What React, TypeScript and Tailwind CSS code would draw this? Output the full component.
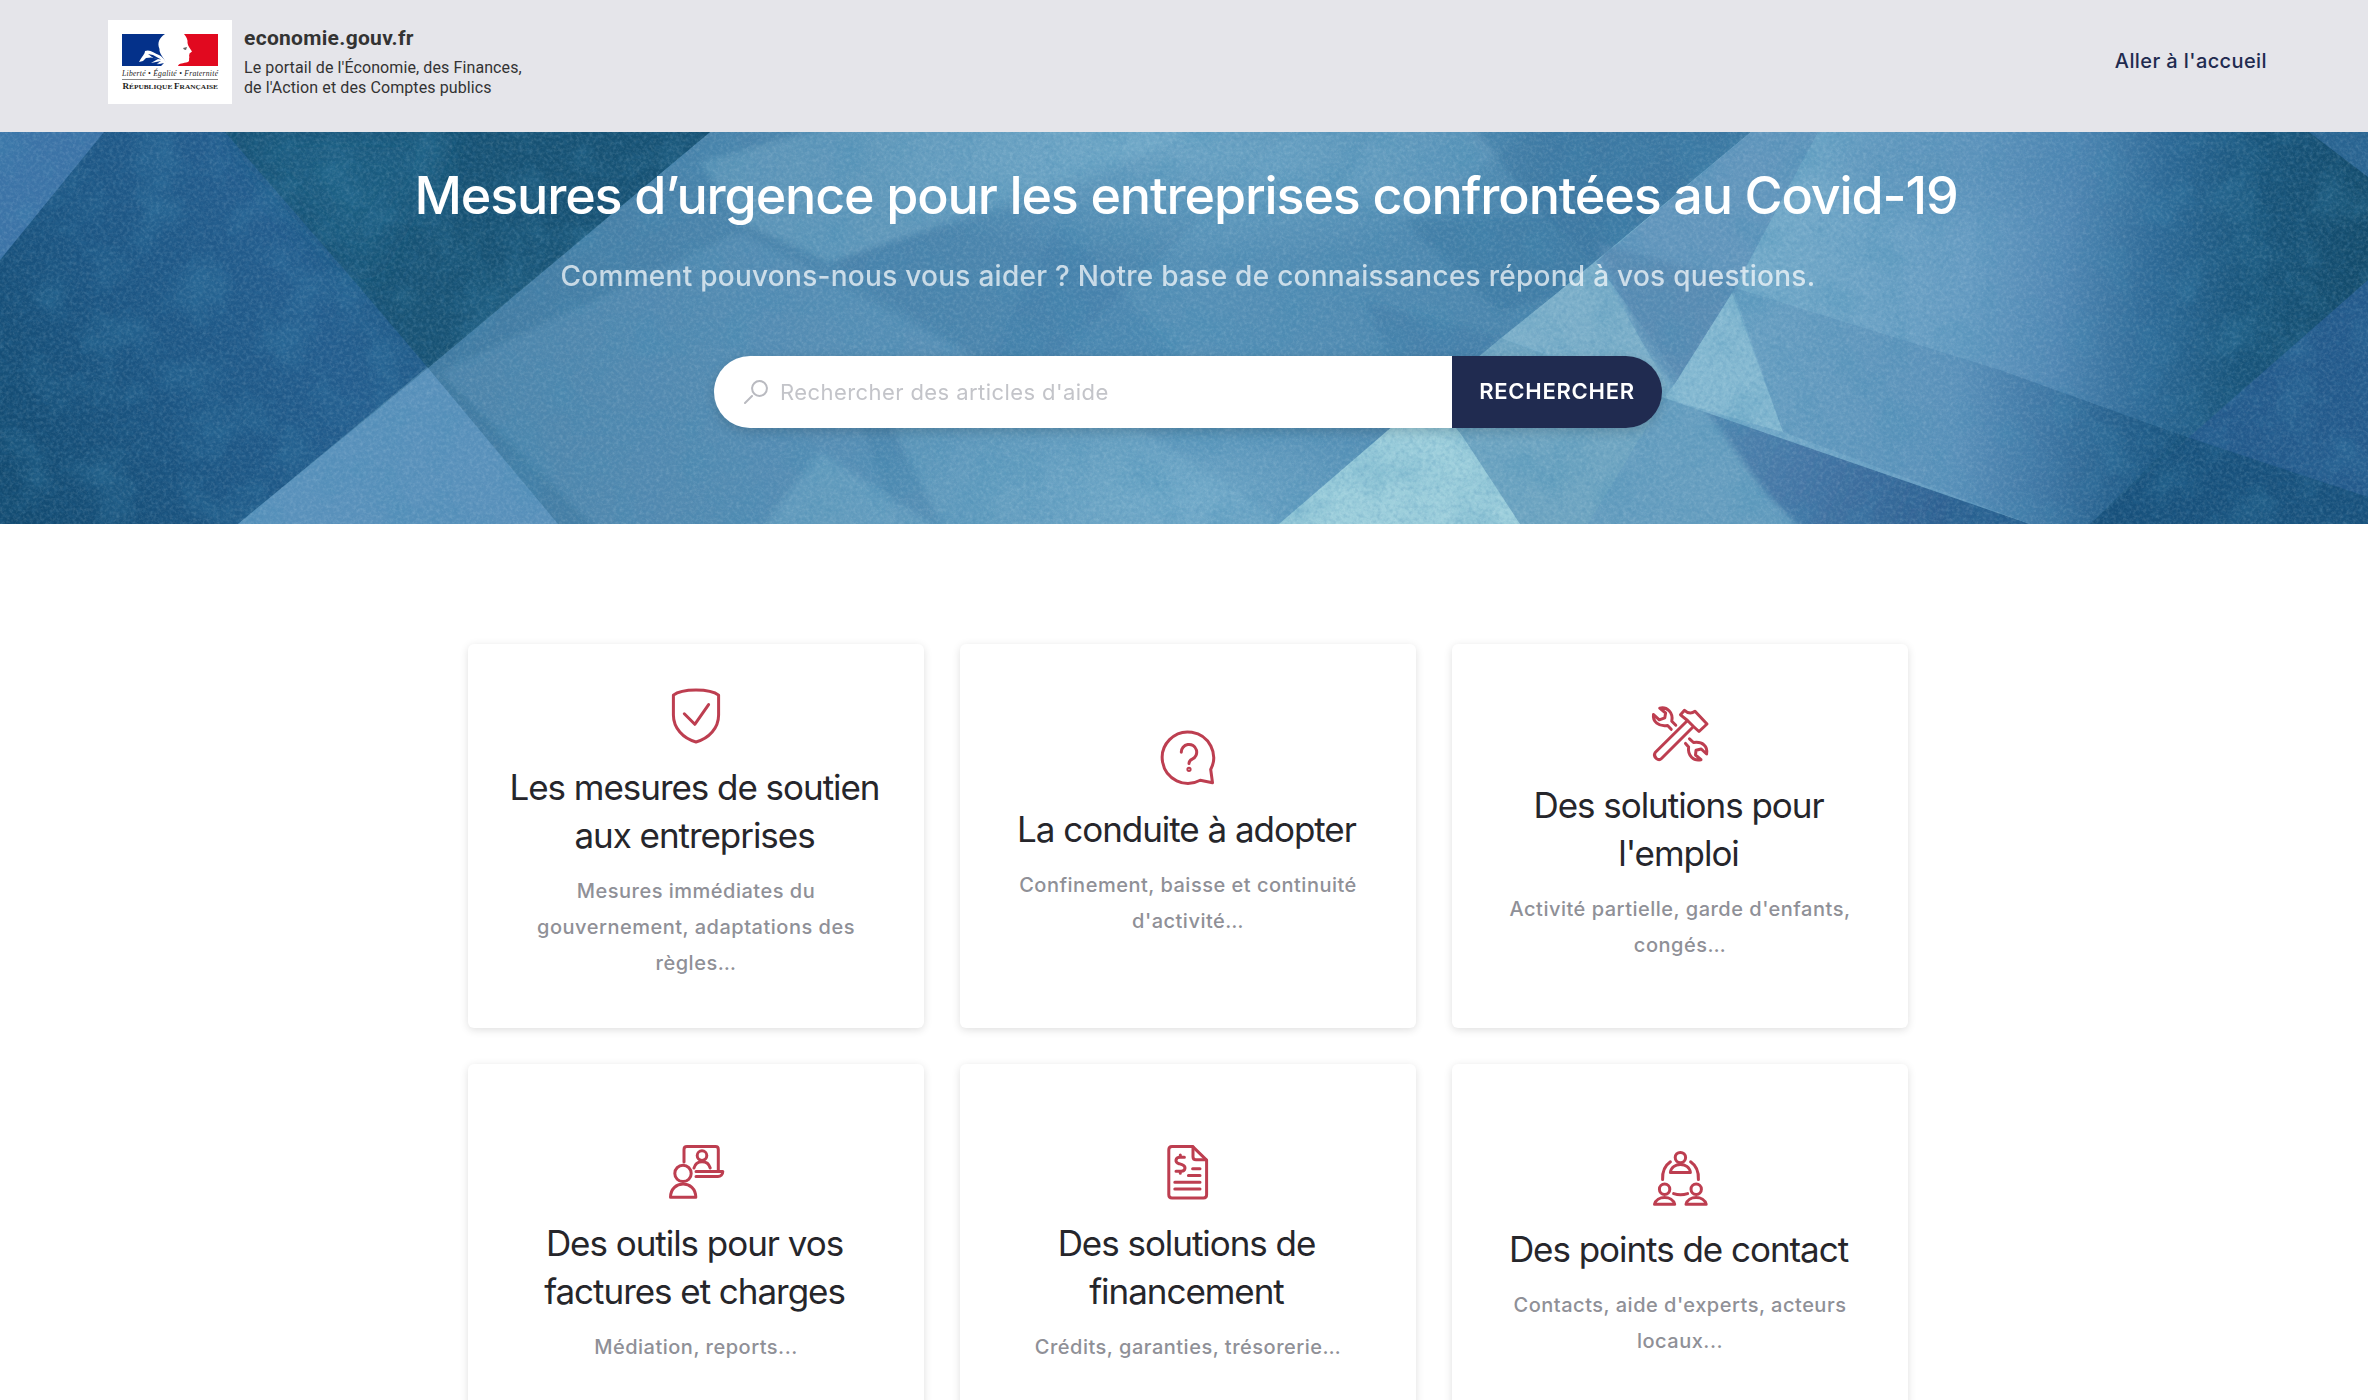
import React from "react";

const ICON = {
  width: 60,
  height: 60,
  viewBox: "0 0 60 60",
  fill: "none",
  stroke: "#bd3e50",
  strokeWidth: 3,
  strokeLinecap: "round" as const,
  strokeLinejoin: "round" as const,
  className: "-m-[2px] shrink-0",
};

function ShieldIcon() {
  return (
    <svg {...ICON}>
      <path d="M7.4 9.2C12 5.400 21 4 30 4C39 4 48 5.400 52.6 9.2V29C52.6 42 43 52.5 30 56C17 52.5 7.4 42 7.4 29Z" />
      <path d="M18.3 27.8L28.8 38.3L42.6 18.6" />
    </svg>
  );
}

function QuestionIcon() {
  return (
    <svg {...ICON}>
      <g transform="translate(0.7 0.5)">
        <path d="M52 41A25.7 25.7 0 1 0 41.5 51.7L53.8 54.2Z" />
        <path d="M22.6 23.8A7.7 7.7 0 1 1 33.5 30.6Q30.3 32.2 30.3 35" />
        <circle cx="30.3" cy="40.8" r="1.6" strokeWidth="2" />
      </g>
    </svg>
  );
}

function ToolsIcon() {
  return (
    <svg {...ICON}>
      <g transform="translate(-1 0)">
        <path d="M38.5 16.5L31.5 10.800L35.5 6.3C39 9.500 43 9.500 46 7.300L58 20L50 27.5L44.5 22.5L12.5 54.5C9.5 57.5 3.5 53 6.2 48.5L38.5 16.5L44.5 22.500" />
        <path d="M22.2 25.3L18.6 21.5C9.5 23 3.5 17.5 4.5 10.5L10.3 15.8L15.8 13.8L16.6 9L10.7 4.2C18 2.5 24.5 8.5 22.8 17.2L26.8 21.2" />
        <path d="M36.5 39.4L39.6 43C38.5 51.5 44.5 57.5 52 55.7L46.5 51L47 46.3L52.2 45L57.6 50C59 42 53.5 37.2 44.5 38.5L40.5 34.8" />
      </g>
    </svg>
  );
}

function TrainingIcon() {
  return (
    <svg {...ICON}>
      <g transform="translate(-1 0)">
        <path d="M19 20V7.5Q19 4.6 22 4.6H50.5Q53.3 4.6 53.3 7.5V29.5" />
        <path d="M31 29.5H57.8C57.8 32.5 55.5 34.4 53 34.4H31" />
        <circle cx="37" cy="13.6" r="4.8" />
        <path d="M29 26C31 17.5 43 17.5 45.2 26" />
        <circle cx="18" cy="31.4" r="8.2" />
        <path d="M5.5 55.3C5.5 37.5 30.8 37.5 30.8 55.3Z" />
      </g>
    </svg>
  );
}

function InvoiceIcon() {
  return (
    <svg {...ICON}>
      <g transform="translate(0 -0.300)">
        <path d="M34.5 4.7H14Q10.8 4.7 10.8 8V53Q10.8 56.2 14 56.2H45.5Q48.6 56.2 48.6 53V18.4Z" />
        <path d="M35 5V15Q35 18 38 18H48" />
        <path d="M26.4 15.5H22.3C17 15.5 16.6 20.7 21 22L24 23C28.6 24.5 27.5 29.6 23.2 29.6H18M22.3 13.2V15.5M22.3 29.6V31.6" />
        <path d="M34.6 27H42M30.4 33.8H42M16.8 40.6H42M16.8 47.4H42" />
      </g>
    </svg>
  );
}

function PeopleIcon() {
  const person = "M0 13.6C2 4.5 18.2 4.5 20.2 13.6Z";
  return (
    <svg {...ICON}>
      <circle cx="30.4" cy="9.6" r="5.2" />
      <path d="M20.4 24.4C22 14 38.8 14 40.4 24.4Z" />
      <circle cx="14.6" cy="41.2" r="5.2" />
      <path transform="translate(4.5 42.7)" d={person} />
      <circle cx="46.2" cy="41.2" r="5.2" />
      <path transform="translate(36 42.7)" d={person} />
      <path d="M12.6 31.6C12.2 23.5 15 17.5 20.4 13.8M48.4 31.6C48.8 23.5 46 17.5 40.6 13.8M23.6 45.6Q30.5 47.8 37.6 45.6" />
    </svg>
  );
}

const CARDS = [
  { icon: <ShieldIcon />, title: ["Les mesures de soutien", "aux entreprises"], text: ["Mesures immédiates du", "gouvernement, adaptations des", "règles…"] },
  { icon: <QuestionIcon />, title: ["La conduite à adopter"], text: ["Confinement, baisse et continuité", "d'activité…"] },
  { icon: <ToolsIcon />, title: ["Des solutions pour", "l'emploi"], text: ["Activité partielle, garde d'enfants,", "congés…"] },
  { icon: <TrainingIcon />, title: ["Des outils pour vos", "factures et charges"], text: ["Médiation, reports..."] },
  { icon: <InvoiceIcon />, title: ["Des solutions de", "financement"], text: ["Crédits, garanties, trésorerie…"] },
  { icon: <PeopleIcon />, title: ["Des points de contact"], text: ["Contacts, aide d'experts, acteurs", "locaux..."] },
];

function Logo() {
  return (
    <svg width="124" height="84" viewBox="0 0 124 84" className="shrink-0 bg-white">
      <path d="M14 14H57C51 18 49 23 51.500 29C51 33 55 37 57 41L58 46H14Z" fill="#04318a" />
      <path d="M76 14H110V46H70C71 43 75 43.500 80 42C82 41 80.500 38.500 81.500 37C80.500 36 81.500 35 81.500 33.500L84 31.500C82 28.500 80 26 79.500 23C80 20 78.500 17 76 14Z" fill="#e1091f" />
      <path d="M31 42C34 36 37 34 37 31C42 29 46 33 51 35C54 36.500 56 39 58 42V46H53L56 43L47 45L53 41L43 43L50 39L43 37.500L38 38L35 41Z" fill="#fff" />
      <path d="M40 34L45 35L53 39.500L46 38.500ZM38 45L46 43L52 44L45 46H39Z" fill="#04318a" />
      <path d="M75 28L79 27L78 30L76 29.500Z" fill="#666" />
      <path d="M14 59.500H110" stroke="#555" strokeWidth="0.7" />
      <text x="14" y="56" textLength="96" fontFamily="Liberation Serif, serif" fontStyle="italic" fontSize="7.600" fill="#222">Liberté • Égalité • Fraternité</text>
      <text x="14.500" y="69" textLength="95.500" lengthAdjust="spacingAndGlyphs" fontFamily="Liberation Serif, serif" fontSize="8.600" fontWeight="700" fill="#1d1d1b">R<tspan fontSize="7">ÉPUBLIQUE </tspan>F<tspan fontSize="7">RANÇAISE</tspan></text>
    </svg>
  );
}

function HeroBackground() {
  return (
    <svg className="absolute inset-0 h-full w-full" viewBox="0 0 2368 392" preserveAspectRatio="none">
      <defs>
        <linearGradient id="left" gradientUnits="userSpaceOnUse" x1="0" y1="350" x2="480" y2="90">
          <stop offset="0" stopColor="#124a70" />
          <stop offset="0.35" stopColor="#1c5583" />
          <stop offset="0.65" stopColor="#235c8d" />
          <stop offset="1" stopColor="#1c5883" />
        </linearGradient>
        <linearGradient id="mid" gradientUnits="userSpaceOnUse" x1="450" y1="0" x2="1700" y2="0">
          <stop offset="0" stopColor="#427ba2" />
          <stop offset="0.3" stopColor="#4f88af" />
          <stop offset="0.6" stopColor="#5791b7" />
          <stop offset="1" stopColor="#4680a8" />
        </linearGradient>
        <linearGradient id="right" gradientUnits="userSpaceOnUse" x1="1700" y1="120" x2="2368" y2="180">
          <stop offset="0" stopColor="#7ab0cc" />
          <stop offset="0.4" stopColor="#689dc3" />
          <stop offset="0.54" stopColor="#5288b4" />
          <stop offset="0.68" stopColor="#2c6895" />
          <stop offset="0.82" stopColor="#175379" />
          <stop offset="1" stopColor="#124a6a" />
        </linearGradient>
        <linearGradient id="low" gradientUnits="userSpaceOnUse" x1="1700" y1="280" x2="2000" y2="400">
          <stop offset="0" stopColor="#5487af" />
          <stop offset="0.4" stopColor="#4374a4" />
          <stop offset="1" stopColor="#235788" />
        </linearGradient>
        <linearGradient id="fold" gradientUnits="userSpaceOnUse" x1="1740" y1="0" x2="2181" y2="0">
          <stop offset="0" stopColor="#4078a8" stopOpacity="0.22" />
          <stop offset="0.5" stopColor="#2c6598" stopOpacity="0.2" />
          <stop offset="1" stopColor="#144e78" stopOpacity="0.75" />
        </linearGradient>
        <radialGradient id="glow">
          <stop offset="0" stopColor="#7fb6d2" stopOpacity="0.6" />
          <stop offset="1" stopColor="#7fb6d2" stopOpacity="0" />
        </radialGradient>
        <clipPath id="wedge"><polygon points="1501,206 1664,266 2030,392 1279,392" /></clipPath>
        <filter id="soft" x="-20%" y="-20%" width="140%" height="140%"><feGaussianBlur stdDeviation="16" /></filter>
        <filter id="edge" x="-5%" y="-5%" width="110%" height="110%"><feGaussianBlur stdDeviation="3" /></filter>
        <filter id="grain" x="0" y="0" width="100%" height="100%">
          <feTurbulence type="fractalNoise" baseFrequency="0.3" numOctaves="3" seed="7" />
          <feColorMatrix values="0 0 0 0 0.85  0 0 0 0 0.95  0 0 0 0 1  1.5 0 0 0 -0.62" />
        </filter>
        <filter id="shade" x="0" y="0" width="100%" height="100%">
          <feTurbulence type="fractalNoise" baseFrequency="0.22" numOctaves="3" seed="21" />
          <feColorMatrix values="0 0 0 0 0.05  0 0 0 0 0.22  0 0 0 0 0.42  1.5 0 0 0 -0.62" />
        </filter>
        <filter id="mottle" x="0" y="0" width="100%" height="100%">
          <feTurbulence type="fractalNoise" baseFrequency="0.022" numOctaves="4" seed="4" />
          <feColorMatrix values="0 0 0 0 0.05  0 0 0 0 0.26  0 0 0 0 0.45  1.8 0 0 0 -0.8" />
        </filter>
      </defs>
      <rect width="2368" height="392" fill="url(#mid)" />
      <g filter="url(#edge)">
        <polygon points="700,30 840,-9 1200,-9 1090,50 830,130 740,90" fill="#7db2cd" opacity="0.4" />
        <polygon points="740,100 985,232 840,232 900,400 600,400 440,240" fill="#6ba2c4" opacity="0.28" />
        <polygon points="830,130 1110,30 1300,-9 1040,240 985,232" fill="#37749f" opacity="0.25" />
        <polygon points="1060,90 1200,250 980,250" fill="#3a77a2" opacity="0.22" />
        <polygon points="890,290 1130,290 1300,400 945,400" fill="#72abc9" opacity="0.4" />
        <polygon points="820,320 945,400 760,400" fill="#7fb6d0" opacity="0.35" />
        <polygon points="1380,-9 1540,-9 1410,90 1340,60" fill="#6fa7c7" opacity="0.3" />
        <polygon points="1470,-9 1760,-9 1596,130 1545,85" fill="#2f6d99" opacity="0.5" />
        <polygon points="1400,85 1545,85 1596,130 1560,160 1500,180" fill="#38759f" opacity="0.5" />
        <polygon points="1365,170 1501,206 1450,250 1400,250" fill="#38759f" opacity="0.3" />
      </g>
      <ellipse cx="1180" cy="370" rx="330" ry="110" fill="url(#glow)" />
      <ellipse cx="1200" cy="20" rx="360" ry="110" fill="url(#glow)" />
      <polygon points="0,0 710,0 238,392 0,392" fill="url(#left)" />
      <polygon points="225,0 710,0 428,236 355,150" fill="#15506f" opacity="0.8" />
      <polygon points="235,0 450,0 365,145" fill="#1e6085" opacity="0.7" filter="url(#soft)" />
      <polygon points="0,0 104,0 0,128" fill="#3c73a7" />
      <polygon points="428,236 558,392 238,392" fill="#5b92bc" />
      <polygon points="1751,0 2368,0 2368,392 1279,392" fill="url(#right)" />
      <polygon points="1751,0 1818,0 1732,161 1679,245 1596,130" fill="#6497bd" />
      <polygon points="1596,110 1740,150 1679,262 1640,210" fill="#5688b0" opacity="0.7" filter="url(#edge)" />
      <polygon points="1596,130 1672,262 1501,206" fill="#7db0ca" />
      <polygon points="1732,161 1676,250 1664,266 1783,300" fill="#86bad2" />
      <polygon points="1732,155 2000,238 2181,303 2090,392 2030,392 1783,300" fill="url(#fold)" />
      <polygon points="1501,206 1664,266 2030,392 1279,392" fill="#70a6c2" />
      <polygon points="1664,266 2030,392 1588,392" fill="#689fc0" />
      <g clipPath="url(#wedge)">
        <polygon points="1690,255 2060,380 2060,410 1815,410 1765,360" fill="url(#low)" filter="url(#edge)" />
      </g>
      <polygon points="1430,262 1463,305 1520,392 1279,392" fill="#9dcfdc" />
      <ellipse cx="1960" cy="30" rx="130" ry="50" fill="#3f7aa8" opacity="0.25" filter="url(#soft)" />
      <polygon points="2368,148 2368,392 2090,392" fill="#23598b" />
      <polygon points="2181,303 2368,365 2368,392 2090,392" fill="#134d75" opacity="0.7" />
      <polygon points="2309,0 2368,45 2368,0" fill="#296390" />
      <rect width="2368" height="392" filter="url(#mottle)" opacity="0.35" />
      <rect width="2368" height="392" filter="url(#grain)" opacity="0.2" />
      <rect width="2368" height="392" filter="url(#shade)" opacity="0.34" />
    </svg>
  );
}

export default function App() {
  return (
    <div className="h-[1400px] w-[2368px] overflow-hidden bg-white font-['Inter',sans-serif]">
      <header className="flex h-[132px] items-start justify-between bg-[#e5e5ea] pt-5 pl-[108px] pr-[101px]">
        <div className="flex">
          <Logo />
          <div className="ml-3 whitespace-nowrap font-['Roboto',sans-serif] text-[#333]">
            <div className="mt-[6px] text-[21px] leading-6 font-bold tracking-[0.3px]">economie.gouv.fr</div>
            <div className="mt-2 text-[16px] leading-5 tracking-[0.1px]">Le portail de l'Économie, des Finances,<br />de l'Action et des Comptes publics</div>
          </div>
        </div>
        <a className="mt-[29px] text-[20px] leading-6 font-medium tracking-[0.4px] text-[#1f2b50]">Aller à l'accueil</a>
      </header>

      <section className="relative h-[392px] overflow-hidden">
        <HeroBackground />
        <div className="relative flex flex-col items-center pt-8 pl-2 whitespace-nowrap">
          <h1 className="pr-1 text-[52px] leading-[64px] font-medium tracking-[-1.13px] text-white">Mesures d’urgence pour les entreprises confrontées au Covid-19</h1>
          <p className="mt-7 text-[28px] leading-10 font-medium tracking-[0.27px] text-white/70">Comment pouvons-nous vous aider ? Notre base de connaissances répond à vos questions.</p>
          <div className="mt-[60px] flex h-[72px] w-[948px] overflow-hidden rounded-full shadow-[0_4px_12px_rgba(0,0,0,0.15)]">
            <div className="flex w-[738px] items-center bg-white pl-[30px] text-[22px] tracking-[0.42px] text-[#c3c4c9]">
              <svg width="24" height="24" viewBox="0 0 24 24" fill="none" stroke="#b9bac0" strokeWidth="2" strokeLinecap="round">
                <circle cx="15.500" cy="8.500" r="7.400" />
                <path d="M8 16L1 23" />
              </svg>
              <span className="ml-3">Rechercher des articles d'aide</span>
            </div>
            <button className="w-[210px] bg-[#202b50] pb-[2px] text-[22px] font-semibold tracking-[0.75px] text-white">RECHERCHER</button>
          </div>
        </div>
      </section>

      <main className="mt-[120px] flex justify-center pl-2">
        <div className="grid grid-cols-[456px_456px_456px] auto-rows-[384px] gap-9">
          {CARDS.map((card) => (
            <article key={card.title[0]} className="flex flex-col items-center justify-center rounded-md bg-white pb-[3px] text-center whitespace-nowrap shadow-[0_2px_8px_rgba(0,0,0,0.13)]">
              {card.icon}
              <h2 className="mt-[19px] pr-[3px] text-[35px] leading-[48px] tracking-[-1.04px] text-[#26262b]">
                {card.title.map((line) => <span key={line} className="block">{line}</span>)}
              </h2>
              <p className="mt-[14px] text-[20px] leading-9 font-medium tracking-[0.5px] text-[#8f9097]">
                {card.text.map((line) => <span key={line} className="block">{line}</span>)}
              </p>
            </article>
          ))}
        </div>
      </main>
    </div>
  );
}
